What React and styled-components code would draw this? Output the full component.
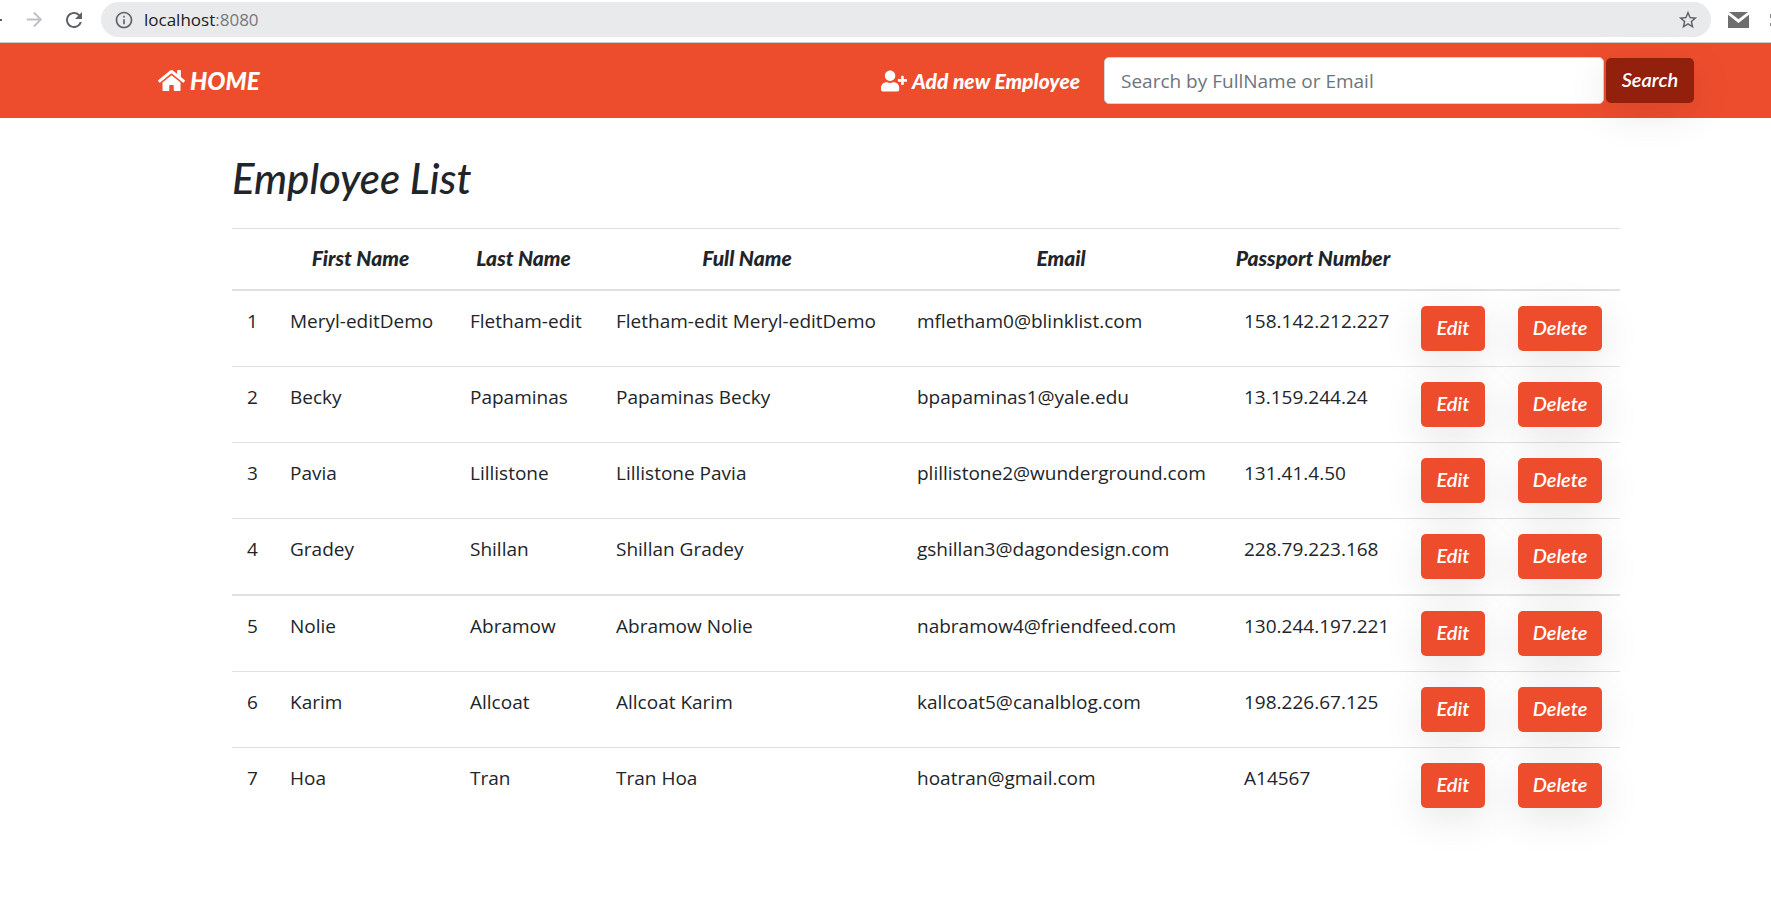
import React from "react";
import styled, { createGlobalStyle } from "styled-components";
import { FaHome, FaUserPlus } from "react-icons/fa";
import { MdArrowForward, MdInfoOutline, MdRefresh, MdStarBorder } from "react-icons/md";

const GlobalStyle = createGlobalStyle`
  * { box-sizing: border-box; }
  body {
    margin: 0;
    background: #fff;
    color: #212529;
    font-family: "Open Sans", "Noto Sans", sans-serif;
    font-size: 19px;
    line-height: 30px;
    overflow-x: hidden;
  }
`;

const script = `
  font-family: Lato, sans-serif;
  font-style: italic;
`;

const BrowserBar = styled.div`
  display: flex;
  align-items: center;
  height: 43px;
  padding: 2px 0 5px;
  border-bottom: 1px solid #c9cbcd;
  overflow: hidden;
`;

const BrowserButton = styled.button`
  display: flex;
  flex: none;
  align-items: center;
  justify-content: ${(p) => p.$align || "center"};
  width: ${(p) => p.$width}px;
  height: 32px;
  padding: 0;
  border: 0;
  background: none;
  color: ${(p) => p.$color || "#5f6368"};
`;

const AddressBar = styled.div`
  display: flex;
  flex: 1;
  align-items: center;
  height: 35px;
  margin-left: 7px;
  padding: 0 12px 0 13px;
  border-radius: 18px;
  background: #e9eaec;
  color: #5f6368;
`;

const Address = styled.div`
  flex: 1;
  margin-left: 10px;
  font-size: 17px;
  color: #75787c;
`;

const Host = styled.span`
  color: #202124;
`;

const Navbar = styled.nav`
  display: flex;
  align-items: center;
  height: 75px;
  padding: 0 77px 0 158px;
  background: #ee4d2d;
`;

const NavLink = styled.a`
  display: flex;
  align-items: center;
  gap: 5px;
  color: #fff;
  ${script}
  font-size: ${(p) => p.$size}px;
  font-weight: 900;
  text-decoration: none;
  white-space: nowrap;
`;

const SearchForm = styled.form`
  display: flex;
  flex: 0 1 590px;
  align-items: center;
  gap: 2px;
  margin-left: 24px;
`;

const NavEnd = styled.div`
  display: flex;
  flex: 1;
  align-items: center;
  justify-content: flex-end;
`;

const SearchInput = styled.input`
  flex: 1;
  min-width: 0;
  height: 47px;
  padding: 0 16px;
  border: 1px solid #ced4da;
  border-radius: 5px;
  background: #fff;
  color: #495057;
  font: inherit;
  &::placeholder { color: #6c757d; opacity: 1; }
`;

const ActionButton = styled.button`
  display: block;
  height: 45px;
  width: ${(p) => p.$width}px;
  padding: 0 0 3px;
  border: 0;
  border-radius: 5px;
  background: ${(p) => (p.$dark ? "#92200d" : "#ee4d2d")};
  color: #fff;
  ${script}
  font-size: 20px;
  font-weight: 600;
  line-height: 30px;
  box-shadow: 0 10px 40px rgba(0, 0, 0, 0.1);
`;

const Main = styled.main`
  padding: 36px 151px 60px 232px;
`;

const Title = styled.h2`
  margin: 0 0 26px;
  ${script}
  font-size: 42px;
  font-weight: 500;
  line-height: 48px;
`;

const Table = styled.table`
  width: 100%;
  border-collapse: separate;
  border-spacing: 0;
  table-layout: fixed;
`;

const HeadCell = styled.th`
  height: 63px;
  padding: 0 24px 2px 15px;
  border-top: 1px solid #dee2e6;
  border-bottom: 2px solid #dee2e6;
  ${script}
  font-size: 21px;
  font-weight: 900;
  text-align: center;
  white-space: nowrap;
`;

/* The label of a narrow column may reach past its padding, so it is centred as a flex item. */
const HeadLabel = styled.span`
  display: flex;
  justify-content: center;
`;

const Cell = styled.td`
  padding: 15px 0 15px 15px;
  border-bottom: ${(p) => p.$line}px solid #dee2e6;
  vertical-align: top;
  white-space: nowrap;
`;

const columns = [
  ["", 43],
  ["First Name", 180],
  ["Last Name", 146],
  ["Full Name", 301],
  ["Email", 327],
  ["Passport Number", 177],
  ["", 97],
  ["", 117],
];
const total = columns.reduce((sum, [, width]) => sum + width, 0);

const Col = styled.col`
  width: ${(p) => (p.$share * 100) / total}%;
`;

const employees = [
  ["Meryl-editDemo", "Fletham-edit", "mfletham0@blinklist.com", "158.142.212.227"],
  ["Becky", "Papaminas", "bpapaminas1@yale.edu", "13.159.244.24"],
  ["Pavia", "Lillistone", "plillistone2@wunderground.com", "131.41.4.50"],
  ["Gradey", "Shillan", "gshillan3@dagondesign.com", "228.79.223.168"],
  ["Nolie", "Abramow", "nabramow4@friendfeed.com", "130.244.197.221"],
  ["Karim", "Allcoat", "kallcoat5@canalblog.com", "198.226.67.125"],
  ["Hoa", "Tran", "hoatran@gmail.com", "A14567"],
];

function lineBelow(index) {
  if (index === employees.length - 1) return 0;
  return index === 3 ? 2 : 1;
}

function EmployeeRow({ index, employee }) {
  const [first, last, email, passport] = employee;
  const values = [index + 1, first, last, `${last} ${first}`, email, passport];
  const line = lineBelow(index);
  return (
    <tr>
      {values.map((value, i) => (
        <Cell key={i} $line={line}>{value}</Cell>
      ))}
      <Cell $line={line}><ActionButton type="button" $width={64}>Edit</ActionButton></Cell>
      <Cell $line={line}><ActionButton type="button" $width={84}>Delete</ActionButton></Cell>
    </tr>
  );
}

export default function App() {
  return (
    <>
      <GlobalStyle />
      <BrowserBar>
        <BrowserButton $width={14} $align="flex-start" aria-label="Back">
          <svg width="2" height="4" viewBox="0 0 2 4"><path d="M0 1h2v2H0z" fill="currentColor" /></svg>
        </BrowserButton>
        <BrowserButton $width={40} $color="#bdc1c6" aria-label="Forward"><MdArrowForward size={23} /></BrowserButton>
        <BrowserButton $width={40} aria-label="Reload"><MdRefresh size={24} /></BrowserButton>
        <AddressBar>
          <MdInfoOutline size={20} />
          <Address><Host>localhost</Host>:8080</Address>
          <BrowserButton $width={22} aria-label="Bookmark"><MdStarBorder size={22} /></BrowserButton>
        </AddressBar>
        <BrowserButton $width={55} aria-label="Mail">
          <svg width="21" height="16" viewBox="0 0 21 16" fill="#6e6e6e">
            <path d="M0 2.800 10.500 11 21 2.800V16H0z" />
            <path d="M1 0h19l-9.500 7.200z" />
          </svg>
        </BrowserButton>
        <BrowserButton $width={5} $align="flex-end" aria-label="Extension">
          <svg width="1" height="14" viewBox="0 0 1 14" fill="#8a8a8a"><path d="M0 1h1v4H0zM0 10h1v3H0z" /></svg>
        </BrowserButton>
      </BrowserBar>

      <Navbar>
        <NavLink href="#home" $size={24}><FaHome size={27} />HOME</NavLink>
        <NavEnd>
          <NavLink href="#add" $size={21}><FaUserPlus size={26} />Add new Employee</NavLink>
          <SearchForm role="search" onSubmit={(e) => e.preventDefault()}>
            <SearchInput type="search" aria-label="Search employees" placeholder="Search by FullName or Email" />
            <ActionButton type="submit" $width={88} $dark>Search</ActionButton>
          </SearchForm>
        </NavEnd>
      </Navbar>

      <Main>
        <Title>Employee List</Title>
        <Table>
          <colgroup>
            {columns.map(([, width], i) => <Col key={i} $share={width} />)}
          </colgroup>
          <thead>
            <tr>
              {columns.map(([label], i) => (
                <HeadCell key={i} scope="col"><HeadLabel>{label}</HeadLabel></HeadCell>
              ))}
            </tr>
          </thead>
          <tbody>
            {employees.map((employee, i) => <EmployeeRow key={employee[2]} index={i} employee={employee} />)}
          </tbody>
        </Table>
      </Main>
    </>
  );
}
